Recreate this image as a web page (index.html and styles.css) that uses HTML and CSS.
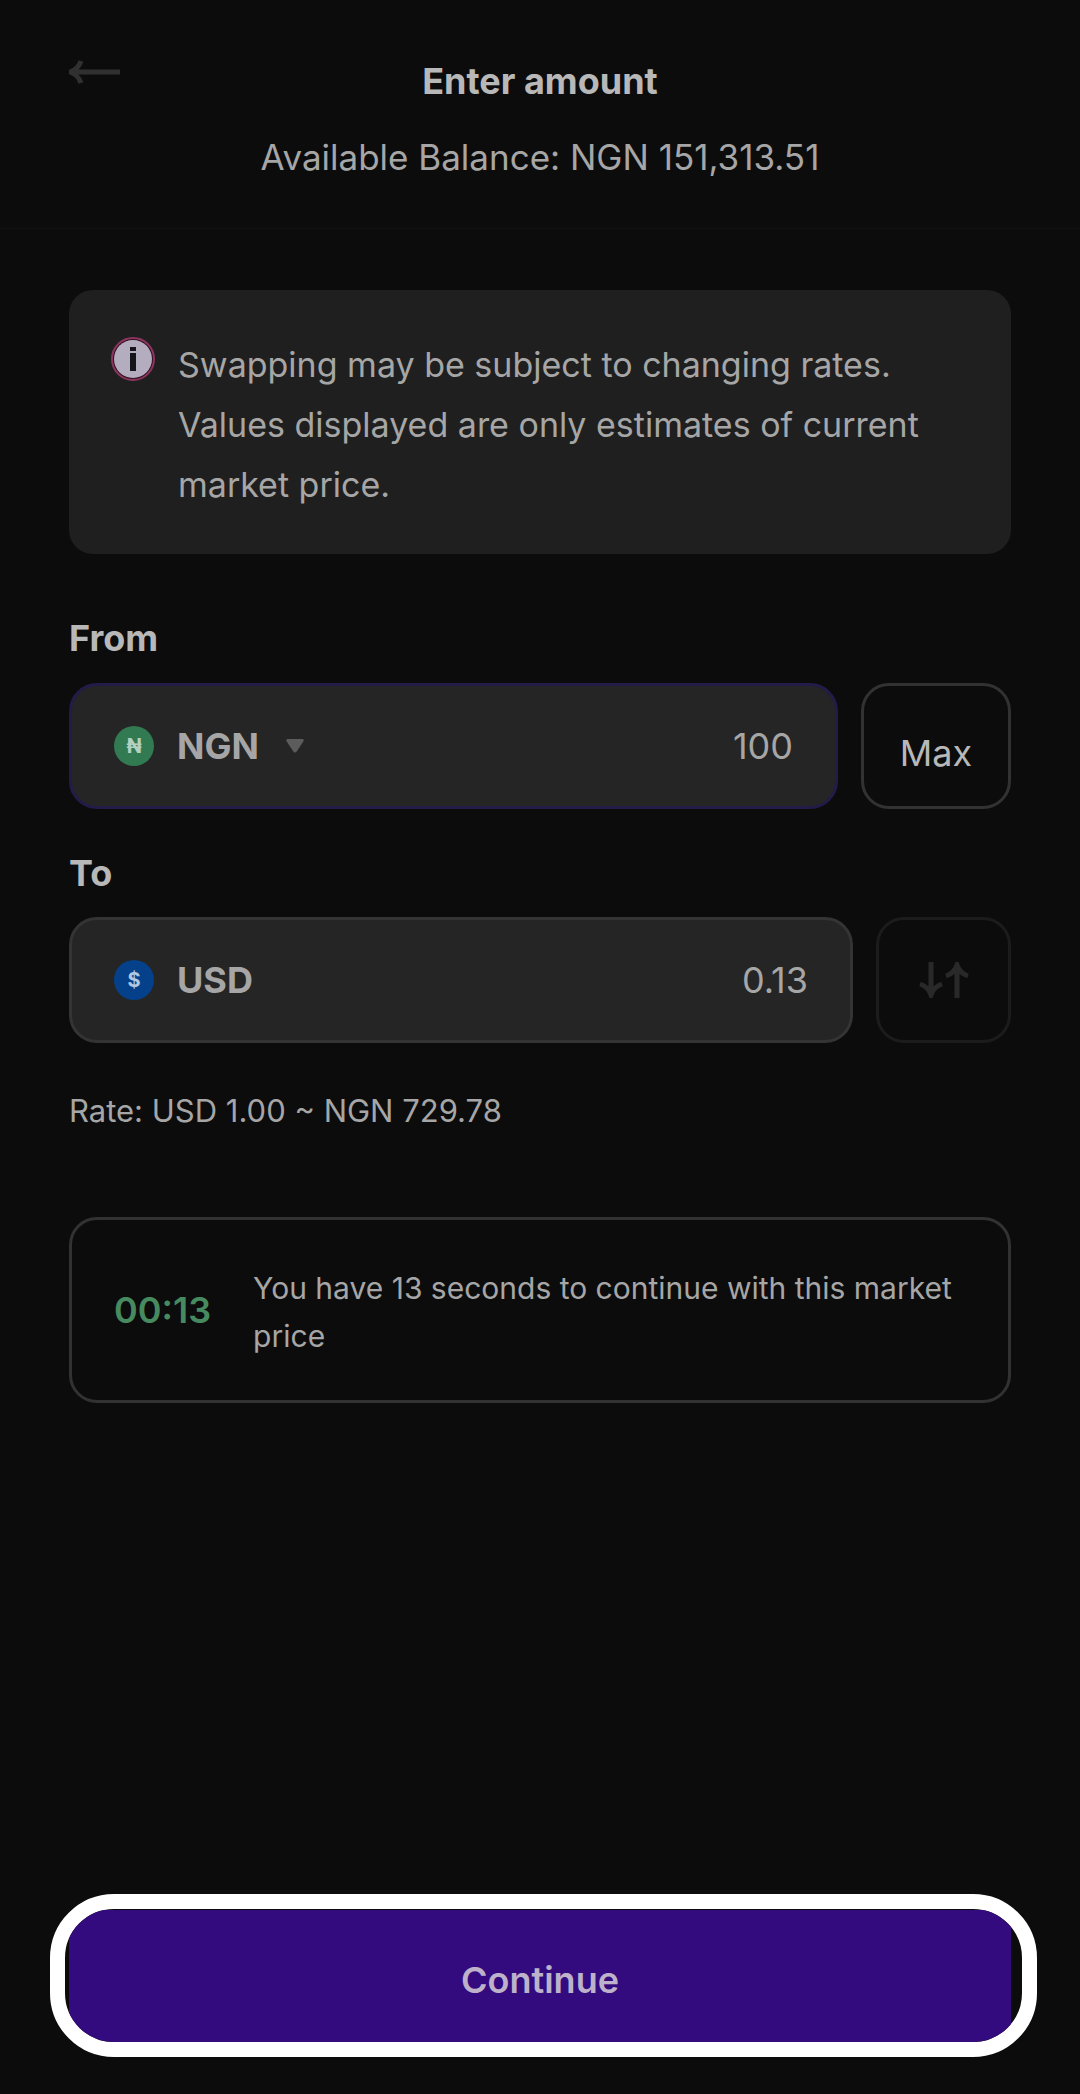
FILE: index.html
```html
<!DOCTYPE html>
<html lang="en">
<head>
    <meta charset="UTF-8">
    <meta name="viewport" content="width=device-width, initial-scale=1.0">
    <title>Enter amount</title>
    <link rel="stylesheet" href="styles.css">
</head>
<body>

<header class="header">
    <button class="back-button" type="button" aria-label="Back">
        <svg width="52" height="24" viewBox="0 0 52 24" fill="none" stroke="currentColor" stroke-width="5">
            <path d="M51 12H3"/>
            <path d="M12 1C10 7 7 10 1 12C7 14 10 17 12 23"/>
        </svg>
    </button>
    <h1 class="title">Enter amount</h1>
    <p class="balance">Available Balance: NGN 151,313.51</p>
</header>

<main class="content">
    <div class="notice">
        <svg class="notice-icon" width="44" height="44" viewBox="0 0 44 44">
            <circle cx="22" cy="22" r="21" fill="#35121f" stroke="#8c3560" stroke-width="2"/>
            <circle cx="22" cy="22" r="19" fill="#b4adc0"/>
            <path d="M19 10h6v4h-6zM19 16h6v18h-6z" fill="#17151c"/>
        </svg>
        <p>Swapping may be subject to changing rates. Values displayed are only estimates of current market price.</p>
    </div>

    <label class="label" for="from-amount">From</label>
    <div class="row">
        <div class="field field-active">
            <span class="coin coin-ngn">₦</span>
            <select class="currency" aria-label="From currency">
                <option>NGN</option>
            </select>
            <svg class="caret" width="18" height="14" viewBox="0 0 18 14">
                <path d="M2 0h14q3 0 1 3l-6 9q-2 3-4 0l-6-9q-2-3 1-3z" fill="#5c5c5c"/>
            </svg>
            <input class="amount" id="from-amount" type="text" inputmode="decimal" value="100">
        </div>
        <button class="max-button" type="button">Max</button>
    </div>

    <label class="label label-to" for="to-amount">To</label>
    <div class="row">
        <div class="field">
            <span class="coin coin-usd">$</span>
            <span class="currency">USD</span>
            <input class="amount" id="to-amount" type="text" value="0.13" readonly>
        </div>
        <button class="swap-button" type="button" aria-label="Swap currencies">
            <svg width="50" height="36" viewBox="0 0 50 36" fill="none" stroke="currentColor" stroke-width="5">
                <path d="M12 0V34M1 22C7 24 10 27 12 33C14 27 17 24 23 22"/>
                <path d="M38 36V2M27 14C33 12 36 9 38 3C40 9 43 12 49 14"/>
            </svg>
        </button>
    </div>

    <p class="rate">Rate: USD 1.00 ~ NGN 729.78</p>

    <div class="timer">
        <span class="countdown">00:13</span>
        <p class="timer-text">You have 13 seconds to continue with this market price</p>
    </div>
</main>

<footer class="footer">
    <div class="highlight">
        <button class="continue-button" type="button">Continue</button>
    </div>
</footer>

</body>
</html>
```
FILE: styles.css
```css
* {
    box-sizing: border-box;
}
body {
    font-family: Inter, "Liberation Sans", sans-serif;
    font-size: 36px;
    background-color: #0c0c0c;
    color: #a6a6a6;
    margin: 0;
    min-height: 100vh;
    display: flex;
    flex-direction: column;
}
h1, p {
    margin: 0;
}
button, input, select {
    font: inherit;
    color: inherit;
    margin: 0;
    padding: 0;
    border: none;
    background: none;
}
button {
    cursor: pointer;
}

/* Header */
.header {
    display: grid;
    grid-template-columns: 1fr auto 1fr;
    row-gap: 22px;
    padding: 54px 69px 44px;
    border-bottom: 1px solid #121212;
    line-height: 54px;
    text-align: center;
}
.back-button {
    display: flex;
    align-items: center;
    justify-self: start;
    height: 36px;
    color: #303030;
}
.title {
    font-size: 36px;
    font-weight: 700;
    color: #b8b8b8;
}
.balance {
    grid-column: 1 / -1;
    font-size: 35px;
}

.content {
    display: flex;
    flex-direction: column;
    padding: 61px 69px;
}
.notice {
    display: flex;
    gap: 23px;
    padding: 45px 42px 39px;
    border-radius: 24px;
    background-color: #1f1f1f;
    font-size: 34px;
    line-height: 60px;
}
.notice-icon {
    flex: none;
    margin-top: 2px;
}

/* Amount fields */
.label {
    margin: 60px 0 21px;
    line-height: 48px;
    font-weight: 700;
    color: #b8b8b8;
}
.label-to {
    margin: 40px 0 20px;
}
.row {
    display: flex;
    gap: 23px;
}
.field {
    flex: 1;
    min-width: 0;
    display: flex;
    align-items: center;
    height: 126px;
    padding: 0 42px;
    border: 3px solid #343434;
    border-radius: 28px;
    background-color: #252525;
}
.field-active {
    border-color: #231b48;
}
.coin {
    flex: none;
    width: 40px;
    height: 40px;
    margin-right: 23px;
    border-radius: 50%;
    line-height: 40px;
    text-align: center;
    font-size: 20px;
    font-weight: 700;
}
.coin-ngn {
    background-color: #327a52;
    color: #b4d0c0;
}
.coin-usd {
    background-color: #04418a;
    color: #b0c8e4;
}
.currency {
    appearance: none;
    font-weight: 700;
}
.caret {
    flex: none;
    margin-left: 27px;
}
.amount {
    flex: 1;
    min-width: 0;
    text-align: right;
    outline: none;
}
.max-button {
    width: 150px;
    padding-top: 14px;
    border: 3px solid #323232;
    border-radius: 28px;
    color: #b8b8b8;
}
.swap-button {
    display: flex;
    align-items: center;
    justify-content: center;
    width: 135px;
    border: 3px solid #1c1c1c;
    border-radius: 28px;
    color: #292929;
}
.rate {
    margin-top: 44px;
    font-size: 31px;
    line-height: 48px;
}

.timer {
    display: flex;
    align-items: center;
    gap: 42px;
    margin-top: 82px;
    padding: 40px 42px;
    border: 3px solid #323232;
    border-radius: 28px;
    font-size: 30px;
    line-height: 48px;
}
.timer-text {
    padding-top: 4px;
}
.countdown {
    font-size: 36px;
    font-weight: 600;
    color: #478a5f;
}

/* Continue */
.footer {
    margin-top: auto;
    padding: 0 43px 37px 50px;
}
.highlight {
    display: flex;
    height: 163px;
    padding: 1px 11px 0 4px;
    border: 15px solid #fff;
    border-radius: 64px;
    overflow: hidden;
}
.continue-button {
    flex: 1;
    padding-top: 8px;
    background-color: #340b7e;
    color: #beb2ca;
    font-weight: 600;
}
```
